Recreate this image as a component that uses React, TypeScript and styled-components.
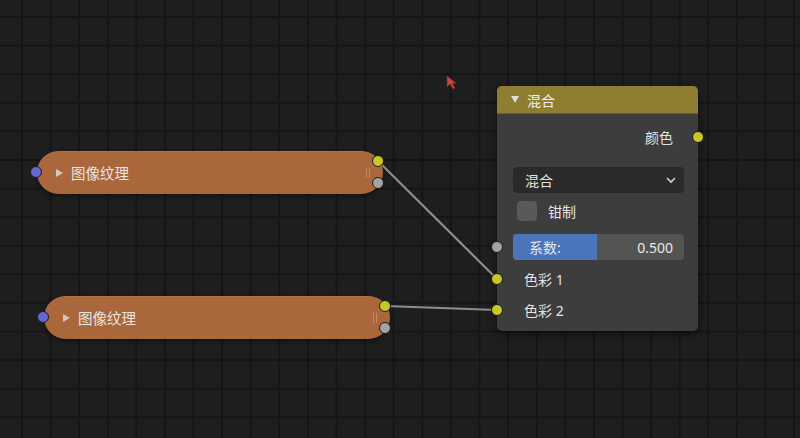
import styled, { createGlobalStyle } from 'styled-components';

const GlobalStyle = createGlobalStyle`
  html, body {
    margin: 0;
    padding: 0;
    background: #1d1d1d;
    overflow: hidden;
  }
  * {
    box-sizing: border-box;
  }
`;

const FONT = `'Noto Sans', 'Noto Sans CJK SC', sans-serif`;

const Canvas = styled.div`
  position: relative;
  width: 800px;
  height: 438px;
  overflow: hidden;
  font-family: ${FONT};
  background-color: #1e1e1e;
  background-image:
    linear-gradient(to right, #151515 1.5px, transparent 1.5px),
    linear-gradient(to bottom, #151515 1.5px, transparent 1.5px);
  background-size: 28.6px 28.6px;
  background-position: 21px 16px;
`;

const Wires = styled.svg`
  position: absolute;
  left: 0;
  top: 0;
  width: 800px;
  height: 438px;
  pointer-events: none;
`;

const SOCKET_COLORS = {
  yellow: '#c8c62a',
  gray: '#a3a3a3',
  blue: '#6467cf',
};

type SocketKind = keyof typeof SOCKET_COLORS;

const Dot = styled.span<{ $kind: SocketKind }>`
  position: absolute;
  width: 12px;
  height: 12px;
  border-radius: 50%;
  background: ${({ $kind }) => SOCKET_COLORS[$kind]};
  border: 1px solid #1a1a1a;
`;

// sockets of a collapsed node: one in on the left, two out on the right
const InDot = styled(Dot)`
  left: -7px;
  top: 15px;
`;

const OutStack = styled.div`
  position: absolute;
  right: -1px;
  top: 4px;
  display: flex;
  flex-direction: column;
  gap: 10px;
  ${Dot} {
    position: static;
  }
`;

const Collapsed = styled.div<{ $left: number; $top: number; $width: number }>`
  position: absolute;
  left: ${({ $left }) => $left}px;
  top: ${({ $top }) => $top}px;
  width: ${({ $width }) => $width}px;
  height: 43px;
  border-radius: 22px;
  background: #a9673b;
  box-shadow: 0 2px 5px rgba(0, 0, 0, 0.45), inset 0 1px 0 rgba(255, 255, 255, 0.08);
  display: flex;
  align-items: center;
  padding-left: 19px;
  color: #e8e4e0;
  font-size: 14.5px;
  z-index: 2;
`;

const PlayArrow = styled.span`
  width: 0;
  height: 0;
  border-top: 4.5px solid transparent;
  border-bottom: 4.5px solid transparent;
  border-left: 7px solid #d6c6b8;
  margin-right: 8px;
`;

const Grip = styled.span`
  position: absolute;
  right: 13px;
  top: 17px;
  width: 4px;
  height: 10px;
  border-left: 1px solid #c98660;
  border-right: 1px solid #c98660;
`;

const MixNode = styled.div`
  position: absolute;
  left: 497px;
  top: 86px;
  width: 201px;
  height: 245px;
  border-radius: 5px;
  background: #3d3d3d;
  box-shadow: 0 3px 8px rgba(0, 0, 0, 0.5);
  display: flex;
  flex-direction: column;
  color: #e3e3e3;
  font-size: 14px;
  z-index: 2;
`;

const Header = styled.div`
  height: 28px;
  border-radius: 5px 5px 0 0;
  background: #8f7e30;
  border-bottom: 1px solid #6e6226;
  display: flex;
  align-items: center;
  padding-left: 14px;
  gap: 8px;
  color: #eee;
`;

const DownArrow = styled.span`
  width: 0;
  height: 0;
  border-left: 4.5px solid transparent;
  border-right: 4.5px solid transparent;
  border-top: 7px solid #ddd;
`;

const Row = styled.div<{ $mt: number; $align?: 'left' | 'right' }>`
  position: relative;
  margin-top: ${({ $mt }) => $mt}px;
  height: 24px;
  display: flex;
  align-items: center;
  justify-content: ${({ $align }) => ($align === 'right' ? 'flex-end' : 'flex-start')};
  padding: 0 25px 0 27px;
`;

const RowSocket = styled(Dot)<{ $side: 'left' | 'right' }>`
  ${({ $side }) => ($side === 'left' ? 'left: -6px;' : 'right: -6px;')}
  top: 50%;
  margin-top: -6px;
`;

const Select = styled.div`
  margin: 18px 14px 0 16px;
  height: 26px;
  border-radius: 4px;
  background: #2a2a2a;
  display: flex;
  align-items: center;
  justify-content: space-between;
  padding: 0 7px 0 12px;
`;

const CheckRow = styled.div`
  margin: 6px 14px 0 20px;
  height: 24px;
  display: flex;
  align-items: center;
  gap: 11px;
`;

const Checkbox = styled.span`
  width: 20px;
  height: 20px;
  border-radius: 4px;
  background: #595959;
`;

const SliderWrap = styled.div`
  position: relative;
  margin-top: 11px;
`;

const Slider = styled.div`
  position: relative;
  margin: 0 14px 0 16px;
  height: 26px;
  border-radius: 4px;
  background: #545454;
  overflow: hidden;
  display: flex;
  align-items: center;
  justify-content: space-between;
  padding: 0 11px 0 16px;
`;

const SliderFill = styled.div`
  position: absolute;
  left: 0;
  top: 0;
  bottom: 0;
  background: #4a75bb;
`;

const SliderText = styled.span`
  position: relative;
  z-index: 1;
  color: #e8e8e8;
`;

const Cursor = styled.svg`
  position: absolute;
  left: 446px;
  top: 75px;
  z-index: 4;
`;

type CollapsedNodeProps = { left: number; top: number; width: number; label: string };

const CollapsedNode = ({ left, top, width, label }: CollapsedNodeProps) => (
  <Collapsed $left={left} $top={top} $width={width}>
    <InDot $kind="blue" />
    <PlayArrow />
    {label}
    <Grip />
    <OutStack>
      <Dot $kind="yellow" />
      <Dot $kind="gray" />
    </OutStack>
  </Collapsed>
);

export default function App() {
  const factor = 0.5;
  return (
    <>
      <GlobalStyle />
      <Canvas>
        <Wires viewBox="0 0 800 438">
          <line x1="378" y1="161" x2="497" y2="279" stroke="#8d8d8d" strokeWidth="2.2" />
          <line x1="385" y1="306" x2="497" y2="310" stroke="#8d8d8d" strokeWidth="2.2" />
        </Wires>

        <CollapsedNode left={37} top={151} width={346} label="图像纹理" />
        <CollapsedNode left={44} top={296} width={346} label="图像纹理" />

        <MixNode>
          <Header>
            <DownArrow />
            混合
          </Header>
          <Row $mt={11} $align="right">
            颜色
            <RowSocket $kind="yellow" $side="right" />
          </Row>
          <Select>
            混合
            <svg width="12" height="8" viewBox="0 0 12 8">
              <path d="M2 2 L6 6 L10 2" fill="none" stroke="#cfcfcf" strokeWidth="1.6" />
            </svg>
          </Select>
          <CheckRow>
            <Checkbox />
            钳制
          </CheckRow>
          <SliderWrap>
            <RowSocket $kind="gray" $side="left" />
            <Slider>
              <SliderFill style={{ width: `${factor * 100 - 1}%` }} />
              <SliderText>系数:</SliderText>
              <SliderText>{factor.toFixed(3)}</SliderText>
            </Slider>
          </SliderWrap>
          <Row $mt={7}>
            <RowSocket $kind="yellow" $side="left" />
            色彩 1
          </Row>
          <Row $mt={7}>
            <RowSocket $kind="yellow" $side="left" />
            色彩 2
          </Row>
        </MixNode>

        <Cursor width="12" height="16" viewBox="0 0 12 16">
          <path d="M1 1 L1 12 L4 9 L7 14 L9 13 L6.5 8.5 L10.5 8.5 Z" fill="#c4483c" stroke="#7a2a22" strokeWidth="0.8" />
        </Cursor>
      </Canvas>
    </>
  );
}
